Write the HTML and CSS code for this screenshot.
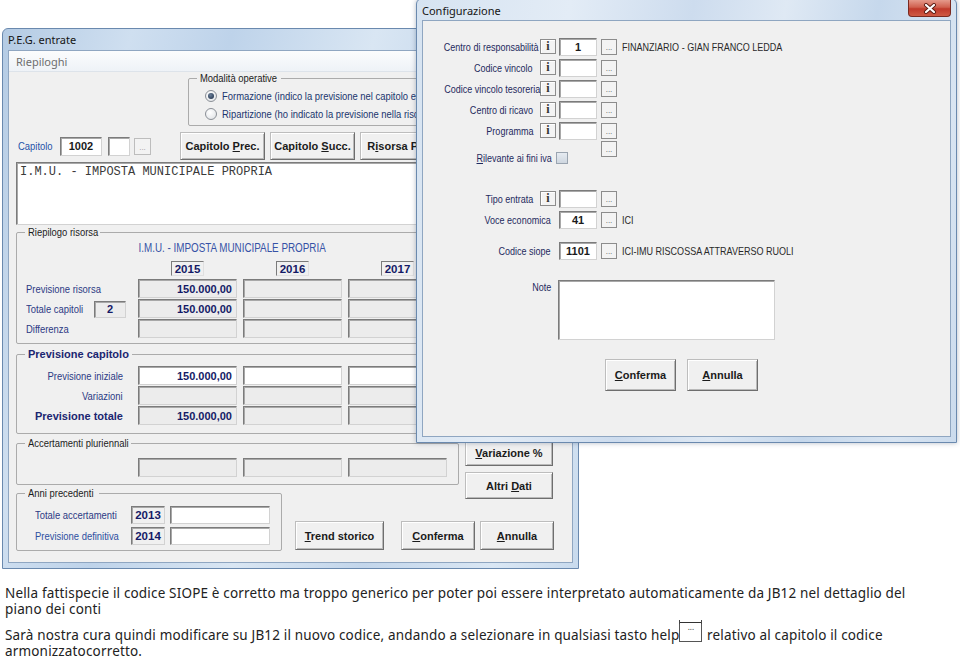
FILE: index.html
```html
<!DOCTYPE html>
<html lang="it">
<head>
<meta charset="utf-8">
<title>P.E.G. entrate - Configurazione</title>
<link rel="stylesheet" href="styles.css">
</head>
<body>
<div class="desk">
  <div class="win win-main">
    <div class="titlebar">P.E.G. entrate</div>
    <div class="client">
      <div class="menubar"><span>Riepiloghi</span></div>
      <div class="mbody">
        <fieldset class="grp grp-mod">
          <legend class="lg-mod"><span class="n">Modalità operative</span></legend>
          <div class="radios">
            <div class="radio-row"><span class="radio on"></span><span class="n">Formazione (indico la previsione nel capitolo e</span></div>
            <div class="radio-row"><span class="radio"></span><span class="n">Ripartizione (ho indicato la previsione nella risorsa</span></div>
          </div>
        </fieldset>

        <div class="caprow">
          <span class="lbl cap"><span class="n">Capitolo</span></span>
          <span class="fld white c w42">1002</span>
          <span class="fld white w22"></span>
          <span class="dots dis">...</span>
          <span class="btn capbtn first"><span>Capitolo <u>P</u>rec.</span></span>
          <span class="btn capbtn"><span>Capitolo <u>S</u>ucc.</span></span>
          <span class="btn capbtn"><span>R<u>i</u>sorsa Prec.</span></span>
        </div>

        <div class="memo">I.M.U. - IMPOSTA MUNICIPALE PROPRIA</div>

        <fieldset class="grp grp-rie">
          <legend class="lg-rie"><span class="n">Riepilogo risorsa</span></legend>
          <div class="rgrid rtitle"><span class="rt"><span class="n">I.M.U. - IMPOSTA MUNICIPALE PROPRIA</span></span></div>
          <div class="rgrid ryears"><span></span><span class="yr">2015</span><span class="yr">2016</span><span class="yr">2017</span></div>
          <div class="rgrid rrow"><span class="lbl"><span class="n">Previsione risorsa</span></span><span class="fld r">150.000,00</span><span class="fld"></span><span class="fld"></span></div>
          <div class="rgrid rrow"><span class="lbl lblbox"><span class="n">Totale capitoli</span><span class="fld c small">2</span></span><span class="fld r">150.000,00</span><span class="fld"></span><span class="fld"></span></div>
          <div class="rgrid rrow"><span class="lbl"><span class="n">Differenza</span></span><span class="fld"></span><span class="fld"></span><span class="fld"></span></div>
        </fieldset>

        <fieldset class="grp grp-pc">
          <legend class="bold">Previsione capitolo</legend>
          <div class="rgrid prow"><span class="lbl ra"><span class="n">Previsione iniziale</span></span><span class="fld white r">150.000,00</span><span class="fld white"></span><span class="fld white"></span></div>
          <div class="rgrid prow"><span class="lbl ra"><span class="n">Variazioni</span></span><span class="fld"></span><span class="fld"></span><span class="fld"></span></div>
          <div class="rgrid prow"><span class="lbl ra strong">Previsione totale</span><span class="fld r">150.000,00</span><span class="fld"></span><span class="fld"></span></div>
        </fieldset>

        <div class="rowb">
          <fieldset class="grp grp-acc">
            <legend class="lg-acc"><span class="n">Accertamenti pluriennali</span></legend>
            <div class="rgrid arow"><span></span><span class="fld"></span><span class="fld"></span><span class="fld"></span></div>
          </fieldset>
          <div class="sidebtns">
            <span class="btn side"><span><u>V</u>ariazione %</span></span>
            <span class="btn side"><span>Altri <u>D</u>ati</span></span>
          </div>
        </div>

        <div class="rowc">
          <fieldset class="grp grp-anni">
            <legend class="lg-anni"><span class="n">Anni precedenti</span></legend>
            <div class="arow2"><span class="lbl al"><span class="n">Totale accertamenti</span></span><span class="fld yb c">2013</span><span class="fld white wf"></span></div>
            <div class="arow2"><span class="lbl al blue"><span class="n">Previsione definitiva</span></span><span class="fld yb c">2014</span><span class="fld white wf"></span></div>
          </fieldset>
          <span class="btn bb trend"><span><u>T</u>rend storico</span></span>
          <span class="btn bb conf"><span><u>C</u>onferma</span></span>
          <span class="btn bb ann"><span><u>A</u>nnulla</span></span>
        </div>
      </div>
    </div>
  </div>

  <div class="win win-conf">
    <div class="titlebar">Configurazione</div>
    <div class="closebtn"><svg width="14" height="11" viewBox="0 0 14 11"><path d="M3 2 L11 9 M11 2 L3 9" stroke="#5a1a12" stroke-width="4" stroke-linecap="round"/><path d="M3 2 L11 9 M11 2 L3 9" stroke="#fff" stroke-width="2.2" stroke-linecap="round"/></svg></div>
    <div class="client cbody">
      <div class="crow"><span class="clbl"><span class="n">Centro di responsabilità</span></span><span class="ibtn">i</span><span class="fld white c cin">1</span><span class="dots">...</span><span class="ctext"><span class="n">FINANZIARIO - GIAN FRANCO LEDDA</span></span></div>
      <div class="crow"><span class="clbl"><span class="n">Codice vincolo</span></span><span class="ibtn">i</span><span class="fld white c cin"></span><span class="dots">...</span></div>
      <div class="crow"><span class="clbl"><span class="n">Codice vincolo tesoreria</span></span><span class="ibtn">i</span><span class="fld white c cin"></span><span class="dots">...</span></div>
      <div class="crow"><span class="clbl"><span class="n">Centro di ricavo</span></span><span class="ibtn">i</span><span class="fld white c cin"></span><span class="dots">...</span></div>
      <div class="crow"><span class="clbl"><span class="n">Programma</span></span><span class="ibtn">i</span><span class="fld white c cin"></span><span class="dots">...</span></div>
      <div class="crow short"><span class="dots lone">...</span></div>
      <div class="crow riv"><span class="clbl rlbl"><span class="n"><u>R</u>ilevante ai fini iva</span></span><span class="chk"></span></div>
      <div class="crow tipo"><span class="clbl"><span class="n">Tipo entrata</span></span><span class="ibtn">i</span><span class="fld white c cin"></span><span class="dots">...</span></div>
      <div class="crow"><span class="clbl wide"><span class="n">Voce economica</span></span><span class="fld white c cin">41</span><span class="dots">...</span><span class="ctext"><span class="n">ICI</span></span></div>
      <div class="crow siope"><span class="clbl wide"><span class="n">Codice siope</span></span><span class="fld white c cin">1101</span><span class="dots">...</span><span class="ctext"><span class="n">ICI-IMU RISCOSSA ATTRAVERSO RUOLI</span></span></div>
      <div class="crow note"><span class="clbl wide"><span class="n">Note</span></span><span class="fld white notebox"></span></div>
      <div class="cbtns"><span class="btn cb"><span><u>C</u>onferma</span></span><span class="btn cb"><span><u>A</u>nnulla</span></span></div>
    </div>
  </div>
</div>

<div class="notes">
  <p>Nella fattispecie il codice SIOPE è corretto ma troppo generico per poter poi essere interpretato automaticamente da JB12 nel dettaglio del<br>piano dei conti</p>
  <p>Sarà nostra cura quindi modificare su JB12 il nuovo codice, andando a selezionare in qualsiasi tasto help<span class="help"><span class="hbox">...</span></span> relativo al capitolo il codice<br>armonizzatocorretto.</p>
</div>
</body>
</html>
```

FILE: styles.css
```css
* { box-sizing: border-box; }
html, body { margin: 0; padding: 0; background: #fff; }
body {
  width: 960px; height: 656px; overflow: hidden;
  font-family: "Liberation Sans", Arial, sans-serif; font-size: 11px; color: #222;
}
.desk { position: relative; height: 585px; }

/* condensed label text (Arial Narrow look) */
.n {
  display: inline-block; white-space: nowrap;
  font-family: "Liberation Sans", Arial, sans-serif;
  transform: scaleX(.82); transform-origin: 0 50%;
}

/* windows */
.win {
  position: absolute; display: flex; flex-direction: column;
  border: 1px solid #6a89ae; border-radius: 6px 6px 0 0;
  padding: 0 5px 5px;
  background: linear-gradient(105deg, #b4cbe4 0%, #cfdff0 18%, #bed3ea 32%, #d9e6f3 52%, #c3d6eb 70%, #dae7f4 88%, #c8daed 100%);
}
.win-main { left: 2px; top: 28px; width: 577px; height: 541px; }
.win-conf {
  left: 416px; top: -2px; width: 541px; height: 445px;
  background: linear-gradient(100deg, #d6e3f1 0%, #e3ecf6 25%, #cddcee 45%, #dfe9f4 60%, #c6d8ec 75%, #d9e5f2 90%, #cbdbed 100%);
  box-shadow: 0 0 5px rgba(40, 60, 90, .35);
}
.titlebar {
  height: 21px; flex: none; display: flex; align-items: center;
  font-family: "Noto Sans", "Liberation Sans", sans-serif; font-size: 11px; color: #151515;
}
.win-conf .titlebar { padding-top: 2px; }
.client {
  flex: 1; min-height: 0; border: 1px solid #8fa6c1; background: #f0f0f0;
  overflow: hidden; display: flex; flex-direction: column;
}
.closebtn {
  position: absolute; top: 1px; right: 5px; width: 43px; height: 17px;
  border: 1px solid #7a2a20; border-top: none; border-radius: 0 0 4px 4px;
  background: linear-gradient(#e59a8c, #d0604f 45%, #c0392b 55%, #cf5a44);
  display: flex; align-items: center; justify-content: center;
}

/* main window */
.menubar {
  height: 21px; flex: none; display: flex; align-items: center; padding-left: 7px;
  background: linear-gradient(#fbfcfd, #eef2f7); border-bottom: 1px solid #dde3ea;
  font-family: "Noto Sans", "Liberation Sans", sans-serif; font-size: 11px; color: #6e6e6e;
}
.mbody { display: flex; flex-direction: column; align-items: flex-start; padding-left: 7px; }

fieldset.grp { margin: 0; padding: 0; border: 1px solid #ababab; border-radius: 2px; min-width: 0; }
fieldset.grp > legend {
  margin-left: 8px; padding: 0 3px; font-size: 11.5px;
  line-height: 13px; color: #1c1c1c; white-space: nowrap; overflow: visible;
}
fieldset.grp > legend.bold { font-family: "Liberation Sans", sans-serif; font-weight: bold; font-size: 11px; color: #1b2670; }
.lg-mod { width: 84px; }
.lg-rie { width: 75px; }
.lg-acc { width: 106px; }
.lg-anni { width: 74px; }

.grp-mod { margin-left: 172px !important; width: 390px; height: 54px; }
.grp-mod > legend { margin-left: 6px; }
.radios { padding: 2px 0 0 16px; }
.radio-row {
  height: 18px; display: flex; align-items: center; gap: 5px; white-space: nowrap;
  font-size: 11.5px; color: #20356e;
}
.radio {
  width: 12px; height: 12px; border-radius: 50%; border: 1px solid #8a8f96;
  background: radial-gradient(circle at 40% 35%, #fff, #dcdfe3);
  display: inline-flex; align-items: center; justify-content: center; flex: none;
}
.radio.on::after {
  content: ""; width: 6px; height: 6px; border-radius: 50%;
  background: radial-gradient(circle at 40% 35%, #6a7f99, #1a2a44);
}

.lbl { font-size: 11.5px; color: #2c3a84; white-space: nowrap; }
.lbl.cap { width: 44px; padding-left: 2px; color: #2552a8; }

.fld {
  display: inline-flex; align-items: center; height: 19px; padding: 0 4px;
  border: 1px solid; border-color: #7b7b7b #d2d2d2 #d2d2d2 #7b7b7b;
  box-shadow: inset 1px 1px 0 #a8a8a8;
  background: #ececec; font-weight: bold; font-size: 11px; color: #141a66; white-space: nowrap;
}
.fld.white { background: #fff; }
.fld.r { justify-content: flex-end; }
.fld.c { justify-content: center; }
.w42 { width: 42px; color: #1a1a1a; }
.w22 { width: 22px; margin-left: 6px; }

.dots {
  width: 16px; height: 16px; flex: none; display: inline-flex; align-items: flex-end; justify-content: center;
  border: 1px solid #8c8c8c; background: #f3f3f3; font-size: 8px; line-height: 10px; color: #555;
  padding-bottom: 1px; margin-right: 5px;
}
.caprow .dots { width: 17px; height: 17px; margin-left: 4px; margin-right: 0; }
.dots.dis { border-color: #bdbdbd; color: #9a9a9a; }

.btn {
  display: inline-flex; align-items: center; justify-content: center; flex: none;
  background: #f0f0f0; border: 1px solid; border-color: #bdbdbd #6e6e6e #6e6e6e #bdbdbd;
  box-shadow: inset 1px 1px 0 #fff, inset -1px -1px 0 #b9b9b9;
  font-weight: bold; font-size: 11px; color: #1b1b1b; white-space: nowrap;
}
.caprow { display: flex; align-items: center; height: 28px; margin-top: 6px; }
.capbtn { width: 85px; height: 28px; margin-left: 5px; }
.capbtn.first { margin-left: 29px; }

.memo {
  margin-top: 2px; width: 560px; height: 63px; background: #fff;
  border: 1px solid; border-color: #7b7b7b #d2d2d2 #d2d2d2 #7b7b7b; box-shadow: inset 1px 1px 0 #a8a8a8;
  padding: 2px 3px; font-family: "Liberation Mono", monospace; font-size: 12px; line-height: 14px; color: #3a3a3a;
  white-space: nowrap;
}

.grp-rie { margin-top: 1px !important; width: 443px; padding-bottom: 4px !important; }
.rgrid { display: grid; grid-template-columns: 115px 99px 99px 99px; column-gap: 6px; }
.rtitle { margin-top: 2px; height: 14px; align-items: center; }
.rt {
  grid-column: 2 / 4; display: flex; justify-content: center; padding-right: 16px;
  font-size: 12px; color: #3652a6; white-space: nowrap;
}
.rt .n { flex: none; transform-origin: 50% 50%; }
.ryears { margin-top: 6px; height: 15px; }
.yr {
  justify-self: center; margin-left: 0; width: 33px; height: 15px;
  display: inline-flex; align-items: center; justify-content: center;
  border: 1px solid; border-color: #7b7b7b #e0e0e0 #e0e0e0 #7b7b7b; background: #f0f0f0;
  font-weight: bold; font-size: 11.5px; color: #141a66;
}
.rrow { height: 20px; }
.ryears + .rrow { margin-top: 3px; }
.rrow .lbl, .prow .lbl { align-self: center; padding-left: 9px; }
.lblbox { display: flex; align-items: center; padding-right: 6px; }
.lblbox .n { width: 60px; flex: none; }
.lblbox .fld { margin-left: auto; }
.fld.small { width: 32px; height: 17px; }

.grp-pc { margin-top: 4px !important; width: 443px; padding: 5px 0 7px !important; }
.prow { height: 20px; }
.prow .lbl.ra { text-align: right; padding-left: 0; padding-right: 9px; }
.prow .lbl.ra .n { transform-origin: 100% 50%; }
.lbl.strong { font-family: "Liberation Sans", sans-serif; font-weight: bold; font-size: 11px; color: #1b2670; }

.rowb { display: flex; align-items: flex-start; margin-top: 3px; }
.grp-acc { width: 443px; padding: 8px 0 7px !important; }
.arow { height: 19px; }
.sidebtns { display: flex; flex-direction: column; gap: 6px; margin-left: 6px; margin-top: 2px; }
.btn.side { width: 88px; height: 27px; }

.rowc { display: flex; align-items: flex-start; margin-top: -12px; }
.grp-anni { width: 266px; padding: 6px 0 5px !important; }
.arow2 { display: flex; align-items: center; height: 18px; }
.arow2 + .arow2 { margin-top: 3px; }
.lbl.al { width: 114px; flex: none; padding-left: 18px; font-size: 11.5px; }
.lbl.blue { color: #2d4fa0; }
.fld.yb { width: 34px; height: 18px; background: #f0f0f0; font-size: 11.5px; }
.fld.wf { width: 100px; height: 18px; margin-left: 5px; }
.btn.bb { height: 29px; margin-top: 34px; }
.trend { width: 89px; margin-left: 13px; }
.conf { width: 74px; margin-left: 17px; }
.ann { width: 74px; margin-left: 5px; }

/* config window */
.cbody { padding-top: 15px; }
.crow { display: flex; align-items: center; height: 21px; flex: none; }
.clbl {
  width: 117px; flex: none; padding-right: 7px; text-align: right;
  font-size: 11px; color: #1f2a5e; white-space: nowrap;
}
.clbl .n { transform-origin: 100% 50%; }
.clbl.wide { width: 136px; padding-right: 8px; }
.ibtn {
  width: 16px; height: 15px; flex: none; margin-right: 3px;
  display: inline-flex; align-items: center; justify-content: center;
  border: 1px solid #8c8c8c; background: #f3f3f3; box-shadow: inset 1px 1px 0 #fff;
  font-family: "Liberation Serif", serif; font-weight: bold; font-size: 12px; color: #333;
}
.cin { width: 38px; height: 18px; margin-right: 4px; color: #1a1a1a; }
.ctext { font-size: 11px; color: #2a2a2a; white-space: nowrap; }
.crow.short { height: 16px; }
.dots.lone { margin-left: 178px; }
.crow.riv { height: 12px; margin-top: -5px; }
.clbl.rlbl { width: 133px; padding-right: 4px; }
.chk { width: 12px; height: 12px; border: 1px solid #9aa4b0; background: linear-gradient(#e6ebf1, #cfd7e0); }
.crow.tipo { margin-top: 24px; }
.crow.siope { margin-top: 10px; }
.crow.note { margin-top: 19px; height: 60px; align-items: flex-start; }
.crow.note .clbl { padding-top: 1px; }
.notebox { width: 217px; height: 60px; margin-left: -1px; }
.cbtns { display: flex; gap: 11px; margin-top: 19px; padding-left: 182px; }
.btn.cb { width: 71px; height: 32px; }

/* notes */
.notes {
  padding-left: 5px; font-family: "Noto Sans", sans-serif; font-size: 13.5px; letter-spacing: .17px;
  line-height: 16px; color: #222;
}
.notes p { margin: 0 0 10px; white-space: nowrap; }
.help {
  position: relative; display: inline-block; overflow: hidden; width: 25px; height: 22px;
  margin: -8px 0 0 -1px; vertical-align: -2px; letter-spacing: 0;
}
.help::before, .help::after {
  content: ""; position: absolute; top: 0; width: 1px; height: 4px; background: #444;
}
.help::before { left: 1px; }
.help::after { right: 1px; }
.hbox {
  display: block; margin: 2px 1px 0; height: 20px;
  border: 1px solid #555; border-top-color: #333; background: #fff;
  font-size: 8px; line-height: 8px; text-align: center; color: #333;
}
```
